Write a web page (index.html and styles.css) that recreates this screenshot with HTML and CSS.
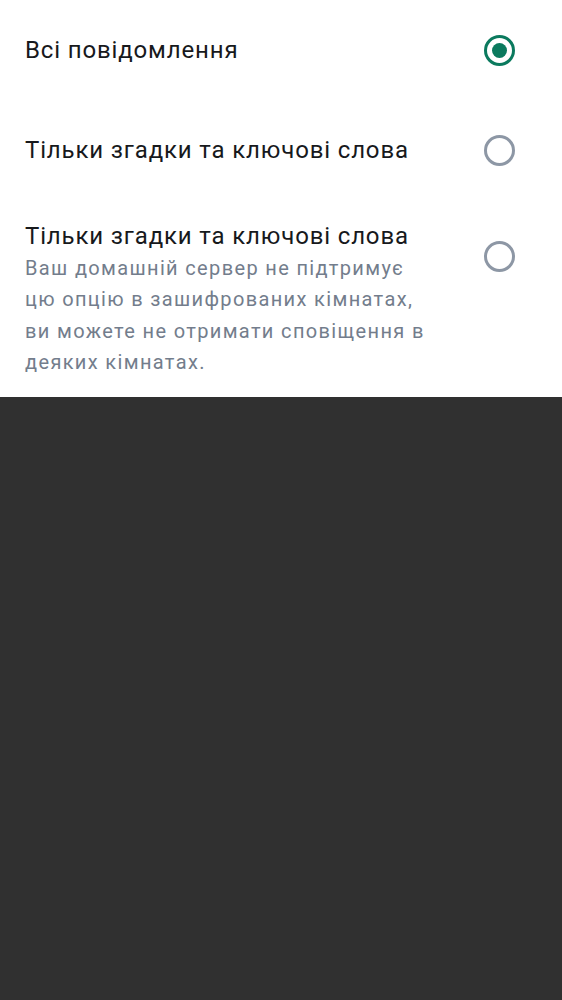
FILE: index.html
```html
<!DOCTYPE html>
<html lang="uk">
<head>
<meta charset="utf-8">
<link rel="stylesheet" href="styles.css">
</head>
<body>
<div class="sheet">
  <div class="row row-center">
    <div class="text"><div class="title">Всі повідомлення</div></div>
    <span class="radio checked"></span>
  </div>
  <div class="row row-center">
    <div class="text"><div class="title">Тільки згадки та ключові слова</div></div>
    <span class="radio"></span>
  </div>
  <div class="row row-top">
    <div class="text">
      <div class="title">Тільки згадки та ключові слова</div>
      <div class="sub">Ваш домашній сервер не підтримує цю опцію в зашифрованих кімнатах, ви можете не отримати сповіщення в деяких кімнатах.</div>
    </div>
    <span class="radio radio-low"></span>
  </div>
</div>
</body>
</html>
```

FILE: styles.css
```css
html, body {
  margin: 0;
  padding: 0;
  background: #303030;
  height: 100%;
}
body {
  font-family: Roboto, "Noto Sans", sans-serif;
}
.sheet {
  background: #ffffff;
  height: 397px;
  box-sizing: border-box;
}
.row {
  display: flex;
  justify-content: space-between;
  padding: 0 47px 0 25px;
}
.row-center {
  height: 100px;
  align-items: center;
}
.row-top {
  align-items: flex-start;
  padding-top: 20px;
}
.text {
  flex: 1;
}
.title {
  font-size: 24px;
  line-height: 33px;
  color: #17191c;
  letter-spacing: 0.85px;
}
.sub {
  font-size: 20px;
  line-height: 31.4px;
  color: #737d8c;
  width: 405px;
  letter-spacing: 1.35px;
}
.radio {
  width: 31px;
  height: 31px;
  box-sizing: border-box;
  border: 3px solid #8d97a5;
  border-radius: 50%;
  flex: none;
  position: relative;
}
.radio.checked {
  border-color: #0b7a5e;
}
.radio.checked::after {
  content: "";
  position: absolute;
  left: 50%;
  top: 50%;
  width: 15px;
  height: 15px;
  margin: -7.5px 0 0 -7.5px;
  border-radius: 50%;
  background: #0b7a5e;
}
.radio-low {
  margin-top: 21px;
}
```
